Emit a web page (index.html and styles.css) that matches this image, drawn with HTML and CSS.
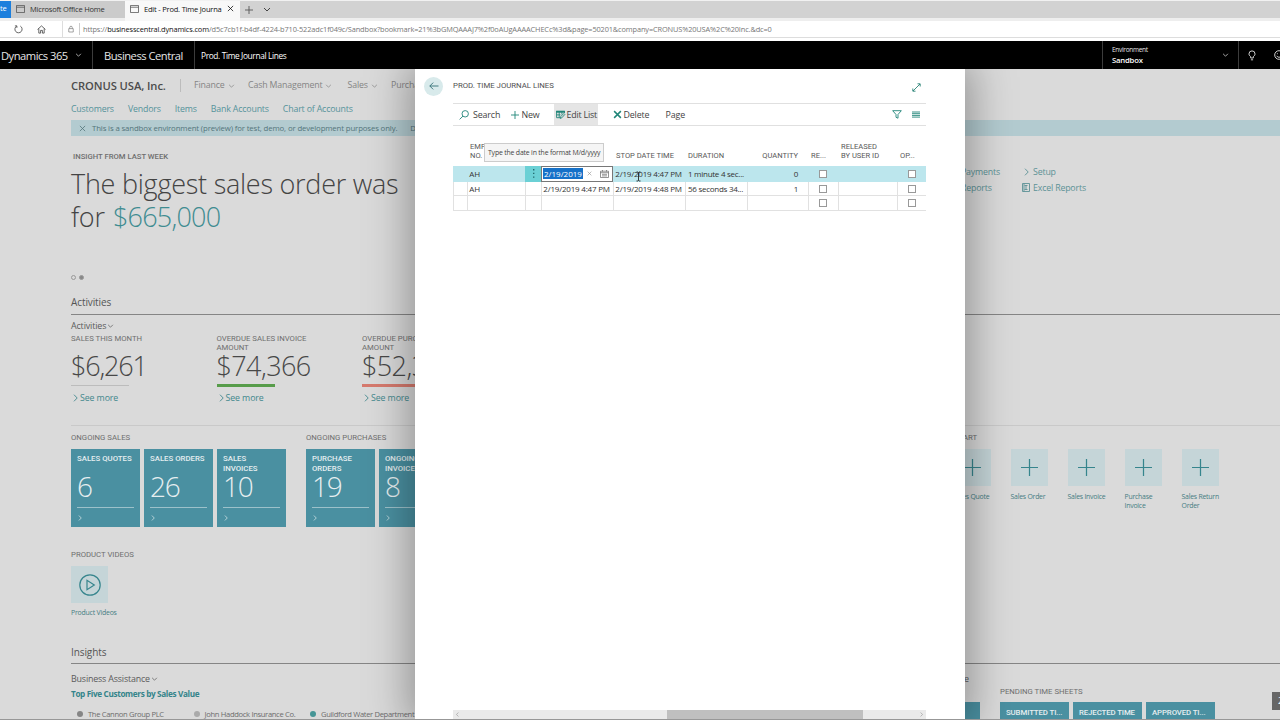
FILE: index.html
```html
<!DOCTYPE html>
<html lang="en">
<head>
<meta charset="utf-8">
<title>Edit - Prod. Time Journal Lines</title>
<link rel="stylesheet" href="styles.css">
</head>
<body>
<svg width="0" height="0" class="defs">
  <symbol id="chev" viewBox="0 0 8 5"><path d="M1 1l3 3 3-3"/></symbol>
  <symbol id="right" viewBox="0 0 5 8"><path d="M1 .7L4.2 4 1 7.3"/></symbol>
  <symbol id="cross" viewBox="0 0 8 8"><path d="M1 1l6 6M7 1L1 7"/></symbol>
  <symbol id="plus" viewBox="0 0 18 18"><path d="M9 0v18M0 9h18"/></symbol>
  <symbol id="win" viewBox="0 0 10 9"><path d="M.5 .5h9v8h-9zM.5 2.5h9"/></symbol>
</svg>

<header class="browser">
  <div class="tabs">
    <span class="tab-edge">te</span>
    <div class="tab"><svg class="i win"><use href="#win"/></svg><span>Microsoft Office Home</span></div>
    <div class="tab active"><svg class="i win"><use href="#win"/></svg><span class="tab-title">Edit - Prod. Time Journa</span><svg class="i x"><use href="#cross"/></svg></div>
    <svg class="i newtab"><use href="#plus"/></svg>
    <svg class="i more"><use href="#chev"/></svg>
  </div>
  <div class="address">
    <svg class="i reload" viewBox="0 0 10 10"><path d="M3 1.2A4 4 0 1 0 7 1.2M3.2 3.2V1H1"/></svg>
    <svg class="i home" viewBox="0 0 10 10"><path d="M.6 5L5 1l4.400 4M2 4v5h2V6h2v3h2V4"/></svg>
    <div class="url">
      <svg class="i lock" viewBox="0 0 8 10"><path d="M1 4.500h6v4.500H1zM2.300 4.500V3a1.700 1.700 0 0 1 3.400 0v1.500"/></svg>
      <span class="url-sep"></span>
      <span class="url-text">https://<b>businesscentral.dynamics.com</b>/d5c7cb1f-b4df-4224-b710-522adc1f049c/Sandbox?bookmark=21%3bGMQAAAJ7%2f0oAUgAAAACHECc%3d&amp;page=50201&amp;company=CRONUS%20USA%2C%20Inc.&amp;dc=0</span>
    </div>
  </div>
</header>

<div class="suite">
  <div class="suite-app"><span>Dynamics 365</span><svg class="i sm"><use href="#chev"/></svg></div>
  <div class="suite-product"><span>Business Central</span></div>
  <div class="suite-page"><span>Prod. Time Journal Lines</span></div>
  <div class="suite-env"><div><small>Environment</small><strong>Sandbox</strong></div><svg class="i sm"><use href="#chev"/></svg></div>
  <div class="suite-icons">
    <svg class="i bulb" viewBox="0 0 8 11"><path d="M2.700 8V6.600C1.500 5.800 1 5 1 3.900a3 3 0 0 1 6 0c0 1.100-.5 1.900-1.700 2.700V8zM2.900 9.800h2.200"/></svg>
    <svg class="i smile" viewBox="0 0 10 10"><circle cx="5" cy="5" r="4.300"/><path d="M2.700 5.800c1 2 3.600 2 4.600 0M3.400 3.300v.9M6.600 3.300v.9"/></svg>
  </div>
</div>

<main class="home-page">
  <nav class="menu">
    <span class="company">CRONUS USA, Inc.</span><span class="menu-sep"></span>
    <span class="m1">Finance<svg class="i sm"><use href="#chev"/></svg></span>
    <span class="m2">Cash Management<svg class="i sm"><use href="#chev"/></svg></span>
    <span class="m3">Sales<svg class="i sm"><use href="#chev"/></svg></span>
    <span class="m4">Purchasing</span>
  </nav>
  <nav class="submenu"><span>Customers</span><span>Vendors</span><span>Items</span><span>Bank Accounts</span><span>Chart of Accounts</span></nav>
  <div class="banner"><svg class="i bx"><use href="#cross"/></svg><span>This is a sandbox environment (preview) for test, demo, or development purposes only.</span><span class="dont">Don't show again</span></div>

  <section class="split hero">
    <div>
      <div class="cap insight">INSIGHT FROM LAST WEEK</div>
      <h1>The biggest sales order was<br>for <em>$665,000</em></h1>
      <div class="dots"><i></i><i class="on"></i></div>
    </div>
    <div class="actions">
      <div class="acol pay"><span>Payments</span><span>Reports</span></div>
      <div class="acol"><span><svg class="i ar"><use href="#right"/></svg>Setup</span><span><svg class="i xl" viewBox="0 0 8 9"><path d="M.5 .5h7v8h-7zM2.500 2.500h3M2.500 6.500h3M4 2.500v4M2 .5v8"/></svg>Excel Reports</span></div>
    </div>
  </section>

  <h2>Activities</h2>
  <h3>Activities<svg class="i h3c"><use href="#chev"/></svg></h3>
  <div class="kpis">
    <div class="kpi"><div class="cap">SALES THIS MONTH</div><div class="num tight">$6,261</div><div class="bar none"></div><a><svg class="i ar"><use href="#right"/></svg>See more</a></div>
    <div class="kpi"><div class="cap">OVERDUE SALES INVOICE AMOUNT</div><div class="num">$74,366</div><div class="bar good"></div><a><svg class="i ar"><use href="#right"/></svg>See more</a></div>
    <div class="kpi"><div class="cap">OVERDUE PURCH. INVOICE AMOUNT</div><div class="num">$52,373</div><div class="bar bad"></div><a><svg class="i ar"><use href="#right"/></svg>See more</a></div>
  </div>

  <section class="split cues">
    <div class="groups">
      <div class="group">
        <div class="cap">ONGOING SALES</div>
        <div class="tiles">
          <div class="tile"><b>SALES QUOTES</b><span>6</span><hr><svg class="i ar"><use href="#right"/></svg></div>
          <div class="tile"><b>SALES ORDERS</b><span>26</span><hr><svg class="i ar"><use href="#right"/></svg></div>
          <div class="tile"><b>SALES INVOICES</b><span>10</span><hr><svg class="i ar"><use href="#right"/></svg></div>
        </div>
      </div>
      <div class="group">
        <div class="cap">ONGOING PURCHASES</div>
        <div class="tiles">
          <div class="tile"><b>PURCHASE ORDERS</b><span>19</span><hr><svg class="i ar"><use href="#right"/></svg></div>
          <div class="tile"><b>ONGOING INVOICES</b><span>8</span><hr><svg class="i ar"><use href="#right"/></svg></div>
        </div>
      </div>
    </div>
    <div class="start">
      <div class="cap">START</div>
      <div class="starts">
        <div class="act"><i><svg class="i pl"><use href="#plus"/></svg></i><span>Sales Quote</span></div>
        <div class="act"><i><svg class="i pl"><use href="#plus"/></svg></i><span>Sales Order</span></div>
        <div class="act"><i><svg class="i pl"><use href="#plus"/></svg></i><span>Sales Invoice</span></div>
        <div class="act"><i><svg class="i pl"><use href="#plus"/></svg></i><span>Purchase<br>Invoice</span></div>
        <div class="act"><i><svg class="i pl"><use href="#plus"/></svg></i><span>Sales Return<br>Order</span></div>
      </div>
    </div>
  </section>

  <div class="videos">
    <div class="cap">PRODUCT VIDEOS</div>
    <div class="act"><i><svg class="i play" viewBox="0 0 22 22"><circle cx="11" cy="11" r="10.200"/><path d="M8 6.300v9.400l7.300-4.700z"/></svg></i><span>Product Videos</span></div>
  </div>

  <h2 class="insights-title">Insights</h2>
  <section class="split">
    <div class="assist">
      <h3>Business Assistance<svg class="i h3c"><use href="#chev"/></svg></h3>
      <h4>Top Five Customers by Sales Value</h4>
      <div class="legend"><span><i class="c1"></i>The Cannon Group PLC</span><span><i class="c2"></i>John Haddock Insurance Co.</span><span><i class="c3"></i>Guildford Water Department</span></div>
    </div>
    <div class="sheets">
      <div class="tail">e</div>
      <div class="sheet-row">
        <div class="tile lone"></div>
        <div>
          <div class="cap">PENDING TIME SHEETS</div>
          <div class="tiles"><div class="tile"><b>SUBMITTED TI...</b></div><div class="tile"><b>REJECTED TIME</b></div><div class="tile"><b>APPROVED TI...</b></div></div>
        </div>
      </div>
    </div>
  </section>
  <div class="counter">2</div>
</main>

<section class="panel">
  <div class="panel-head">
    <span class="back"><svg class="i" viewBox="0 0 10 8"><path d="M9.500 4H.8M4.200 .6L.8 4l3.400 3.400"/></svg></span>
    <span class="title">PROD. TIME JOURNAL LINES</span>
    <svg class="i expand" viewBox="0 0 9 9"><path d="M1 8l7-7M5.500 .8h2.700v2.700M.8 5.500v2.700h2.700"/></svg>
  </div>
  <div class="toolbar">
    <span class="search"><svg class="i" viewBox="0 0 10 10"><circle cx="6.200" cy="3.800" r="3.200"/><path d="M4 6.100L.6 9.400"/></svg>Search</span>
    <span class="new"><svg class="i"><use href="#plus"/></svg>New</span>
    <span class="edit"><svg class="i" viewBox="0 0 9 9"><path class="solid" d="M.2 .7h8.600v2H.2z"/><path d="M.6 1v6.700h3.400M.5 4.900h4M3.200 1v6.700M5.900 1v3.500M8.500 1v2"/><path d="M4.300 8.500l.5-2L7.800 3.500l1 1-3 3.300z"/></svg>Edit List</span>
    <span class="del"><svg class="i"><use href="#cross"/></svg>Delete</span>
    <span class="page">Page</span>
    <svg class="i filter" viewBox="0 0 10 9"><path d="M.7 .7h8.600L6 4.500v3.700L4 7.300V4.500z"/></svg>
    <svg class="i list" viewBox="0 0 8 7"><path d="M0 1h8M0 2.700h8M0 4.400h8M0 6.100h8"/></svg>
  </div>
  <div class="grid">
    <div class="row head">
      <span></span><span>EMP<br>NO.</span><span></span><span></span><span>STOP DATE TIME</span><span>DURATION</span><span class="r">QUANTITY</span><span>RE...</span><span>RELEASED<br>BY USER ID</span><span>OP...</span>
    </div>
    <div class="row sel">
      <span></span><span>AH</span><span class="dotsv"><svg viewBox="0 0 2 9"><path d="M0 0h1.400v1.400H0zM0 3.700h1.400v1.400H0zM0 7.400h1.400v1.400H0z"/></svg></span>
      <span class="field"><mark>2/19/2019 </mark><svg class="i fx"><use href="#cross"/></svg><svg class="i cal" viewBox="0 0 9 8"><path d="M.5 1.200h8v6.300h-8zM.5 2.700h8M2.500 0v1.500M6.500 0v1.500M2 4.300h5M2 5.900h5"/></svg></span>
      <span>2/19/2019 4:47 PM</span><span class="dur">1 minute 4 sec...</span><span class="r">0</span><span><i class="cb"></i></span><span></span><span><i class="cb"></i></span>
    </div>
    <div class="row">
      <span></span><span>AH</span><span></span><span>2/19/2019 4:47 PM</span><span>2/19/2019 4:48 PM</span><span class="dur">56 seconds 34...</span><span class="r">1</span><span><i class="cb"></i></span><span></span><span><i class="cb"></i></span>
    </div>
    <div class="row">
      <span></span><span></span><span></span><span></span><span></span><span></span><span></span><span><i class="cb"></i></span><span></span><span><i class="cb"></i></span>
    </div>
  </div>
  <div class="tip">Type the date in the format M/d/yyyy</div>
  <svg class="i caret" viewBox="0 0 5 10"><path d="M.5 .5h1.500L2.500 1 3 .5h1.500M2.500 1v8M.5 9.500h1.500l.5-.5.5.5h1.500"/></svg>
  <div class="scroll"><svg class="i ar back-ar"><use href="#right"/></svg><div class="thumb"></div><svg class="i ar"><use href="#right"/></svg></div>
</section>
<div class="bottom-edge"></div>
</body>
</html>
```
FILE: styles.css
```css
* { box-sizing: border-box; }
body { margin: 0; width: 1280px; height: 720px; overflow: hidden; position: relative; background: #dadada; font-family: "Open Sans", "Noto Sans", sans-serif; font-size: 9px; color: #5b5b5b; white-space: nowrap; }
.defs { position: absolute; }
.i { fill: none; stroke: currentColor; stroke-width: .9; display: block; flex: none; overflow: visible; }
h1, h2, h3, h4 { margin: 0; font-weight: 400; }
i { font-style: normal; }
.sm { width: 7px; height: 4px; }
.ar { width: 5px; height: 8px; }

.browser { height: 41px; background: #fff; position: relative; z-index: 3; border-top: 1px solid #f1f1f1; }
.tabs { height: 17px; background: #d2d2d2; display: flex; align-items: center; font-size: 7.500px; letter-spacing: -.2px; line-height: 14px; color: #333; }
.tab-edge { width: 11px; height: 17px; line-height: 15px; background: #1c7fdd; color: #fff; }
.tab { width: 114px; height: 17px; display: flex; align-items: center; padding: 0 0 2px 5px; gap: 5px; background: #cbcbcb; }
.tab.active { width: 115px; height: 20px; align-self: flex-start; background: #f8f8f8; color: #111; padding-bottom: 5px; position: relative; }
.win { width: 9px; height: 8px; color: #555; }
.tab-title { width: 78px; letter-spacing: -.2px; }
.x { width: 7px; height: 7px; }
.newtab { width: 8px; height: 8px; margin-left: 5px; stroke-width: 2; color: #555; }
.more { width: 8px; height: 5px; margin-left: 10px; }
.address { height: 20px; border-top: 3px solid #eee; border-bottom: 1px solid #ddd; display: flex; align-items: center; color: #444; }
.reload { width: 9px; height: 9px; margin-left: 14px; }
.home { width: 9px; height: 9px; margin-left: 14px; }
.url { display: flex; align-items: center; border-left: 1px solid #ddd; height: 16px; margin-left: 16px; }
.lock { width: 6px; height: 8px; margin-left: 5px; color: #777; }
.url-sep { width: 1px; height: 12px; background: #ccc; margin: 0 3px 0 5px; }
.url-text { font-size: 7.400px; letter-spacing: -.13px; color: #777; }
.url-text b { font-weight: 400; color: #111; }

.suite { height: 28px; background: #000; color: #e6e6e6; display: flex; position: relative; z-index: 3; overflow: hidden; }
.suite > div { display: flex; align-items: center; height: 28px; border-right: 1px solid #3c3c3c; flex: none; }
.suite-app { width: 93px; padding-left: 1px; gap: 7px; font-size: 11.200px; letter-spacing: -.5px; }
.suite-product { width: 102px; padding-left: 11px; font-size: 11.200px; letter-spacing: -.5px; }
.suite-page { width: 908px; padding-left: 6px; font-size: 8.300px; letter-spacing: -.35px; color: #fff; }
.suite-env { width: 136px; padding: 0 9px; justify-content: space-between; line-height: 10px; }
.suite-env small, .suite-env strong { display: block; font-weight: 400; font-size: 6.500px; letter-spacing: -.3px; }
.suite-env strong { font-size: 7.700px; font-weight: 600; letter-spacing: -.2px; color: #fff; }
.suite .suite-icons { border: 0; padding-left: 9px; gap: 18px; }
.bulb { width: 8px; height: 11px; }
.smile { width: 10px; height: 10px; }

main { padding-left: 71px; position: relative; height: 651px; overflow: hidden; }
.menu { margin-top: 7px; height: 20px; display: flex; align-items: center; font-size: 8.800px; letter-spacing: -.15px; color: #858585; line-height: 19px; padding-bottom: 1px; }
.menu span { display: flex; align-items: center; gap: 3px; }
.menu .company { width: 109px; font-size: 11.200px; font-weight: 600; letter-spacing: -.08px; color: #4c4c4c; }
.menu .menu-sep { width: 1px; height: 13px; background: #bcbcbc; }
.m1 { margin-left: 13px; width: 54px; }
.m2 { width: 99.500px; }
.m3 { width: 43.500px; }
.submenu { height: 20px; margin: 3px 0 1px; display: flex; gap: 14px; align-items: center; font-size: 8.800px; letter-spacing: -.17px; color: #55939a; }
.banner { height: 16px; background: #b3cbd0; display: flex; align-items: center; font-size: 7.800px; letter-spacing: -.135px; color: #54757b; }
.bx { width: 7px; height: 7px; margin: 0 6px 0 8px; }
.dont { margin-left: 13px; }
.split { display: grid; grid-template-columns: 889px 1fr; }
.cap { font-family: Roboto, sans-serif; font-size: 7.750px; line-height: 9px; color: #6e6e6e; }
.hero { height: 156px; }
.insight { padding: 16px 0 0 2px; font-weight: 500; font-size: 7.700px; }
h1 { margin-top: 6px; font-size: 27px; line-height: 33px; font-weight: 300; letter-spacing: -.25px; color: #444; }
h1 em { font-style: normal; margin-left: 1.500px; letter-spacing: -.8px; color: #3f8c91; }
.dots { display: flex; gap: 3px; margin-top: 42px; }
.dots i { width: 5px; height: 5px; border-radius: 50%; border: 1px solid #999; }
.dots .on { background: #888; }
.actions { display: flex; padding-top: 27.500px; color: #5c9296; font-size: 8.800px; letter-spacing: -.17px; line-height: 16px; }
.acol { display: grid; align-content: start; }
.acol span { display: flex; align-items: center; height: 16px; gap: 4px; }
.pay { width: 62px; }
.pay span { padding-left: 1px; }
.acol .ar { margin: 0 0 0 2px; }
.xl { width: 8px; height: 9px; margin-right: -1px; }
h2 { height: 23px; line-height: 20px; border-bottom: 1px solid #858585; font-size: 10px; letter-spacing: -.1px; color: #555; }
.insights-title { line-height: 22px; }
h3 { height: 19px; line-height: 21px; padding-top: 2px; display: flex; align-items: center; gap: 1px; font-size: 8.900px; letter-spacing: -.13px; }
.h3c { width: 7px; height: 4px; }
.kpis { display: flex; height: 92px; border-bottom: 1px solid #c9c9c9; }
.kpi { width: 145.500px; }
.kpi .cap { height: 18px; white-space: normal; width: 100px; }
.num { font-size: 27px; line-height: 28px; height: 32px; font-weight: 300; letter-spacing: -.6px; color: #484848; }
.tight { letter-spacing: -1.200px; }
.bar { width: 58px; height: 3px; margin-bottom: 5px; }
.none { border-top: 1px solid #bcbcbc; margin-top: 1px; margin-bottom: 4px; }
.good { background: #579c4a; }
.bad { background: #d67a6e; }
.kpi a { display: flex; align-items: center; gap: 2px; padding-left: 2px; height: 12px; font-size: 8.800px; letter-spacing: -.1px; color: #42888d; }
.cues { height: 124px; padding-top: 7px; }
.groups { display: flex; gap: 20px; }
.tiles { display: flex; gap: 4px; margin-top: 7px; }
.tile { width: 69px; height: 78px; background: #4a90a1; color: #e6eef0; padding: 5px 6px 0; flex: none; }
.tile b { display: block; font-family: Roboto, sans-serif; font-size: 7.800px; font-weight: 500; line-height: 10px; height: 19px; white-space: normal; }
.tile span { display: block; font-size: 28px; line-height: 27px; height: 34px; font-weight: 300; letter-spacing: -1.200px; }
.tile hr { margin: 0 0 7px; border: 0; height: 1px; background: #9cc1ca; }
.tile .ar { width: 4px; height: 6px; margin-left: 1px; }
.start .cap { margin-left: -6px; }
.starts { display: flex; gap: 20px; margin: 7px 0 0 -6.500px; }
.act { width: 37px; }
.act > i { display: grid; place-items: center; width: 37px; height: 37px; background: #c5d5d8; color: #36858d; }
.act span { display: block; margin-top: 6px; font-size: 6.900px; line-height: 9px; letter-spacing: -.23px; color: #457d83; }
.pl { width: 17px; height: 17px; stroke-width: 1.300; }
.play { width: 22px; height: 22px; stroke-width: 1.200; }
.videos { height: 91px; }
.videos .act { margin-top: 7px; }
.videos .act span { margin-top: 5px; letter-spacing: -.2px; }
.assist h3 { height: 23px; padding-top: 6px; letter-spacing: -.17px; }
h4 { font-size: 8.200px; font-weight: 700; letter-spacing: -.35px; line-height: 14px; color: #34848a; }
.legend { display: flex; padding-left: 6px; margin-top: 7px; font-size: 7.600px; letter-spacing: -.33px; line-height: 12px; color: #6c6c6c; }
.legend span { display: flex; align-items: center; gap: 5px; width: 116.500px; }
.legend i { width: 6px; height: 6px; border-radius: 50%; }
.c1 { background: #858585; } .c2 { background: #aaa; } .c3 { background: #459596; }
.tail { height: 23px; line-height: 30px; font-size: 9px; padding-left: 4px; }
.sheet-row { display: flex; gap: 20px; }
.sheet-row .lone { width: 20px; margin-top: 15px; }
.sheets .tiles { margin-top: 6px; }
.sheets .tile { padding-top: 6px; padding-right: 0; }
.sheets b { white-space: nowrap; letter-spacing: -.1px; }
.sheets .cap { height: 9px; }
.counter { position: absolute; left: 1272px; top: 623px; width: 8px; height: 18px; padding-left: 6px; line-height: 18px; background: #666; color: #fff; }

.panel { position: absolute; z-index: 2; left: 415px; top: 69px; width: 550px; height: 651px; background: #fff; box-shadow: 0 0 40px 6px rgba(0, 0, 0, .34); color: #444; }
.panel-head { height: 34px; display: flex; align-items: center; padding: 0 44px 0 9px; }
.back { width: 19px; height: 19px; border-radius: 50%; background: #d8eaeb; display: grid; place-items: center; color: #326f75; }
.back svg { width: 10px; height: 8px; }
.title { margin-left: 10px; font: 7.800px/10px Roboto, sans-serif; color: #505050; }
.expand { width: 9px; height: 9px; margin-left: auto; margin-top: 2px; color: #2b8577; }
.toolbar { margin: 0 39px 0 38px; height: 23px; border-top: 1px solid #e0e0e0; border-bottom: 1px solid #e0e0e0; display: flex; align-items: center; font-size: 8.900px; letter-spacing: -.15px; }
.toolbar span { display: flex; align-items: center; height: 21px; }
.toolbar svg { color: #1f8578; }
.search { width: 57.500px; padding-left: 6px; gap: 4px; } .search svg { width: 10px; height: 10px; }
.new { width: 43.500px; gap: 3px; } .new svg { width: 8px; height: 8px; stroke-width: 2; }
.edit { width: 44px; background: #e5e5e5; gap: 2px; padding-left: 1.500px; letter-spacing: -.22px; } .edit svg { width: 9px; height: 9px; }
.solid { fill: currentColor; stroke: none; }
.del { padding-left: 14.500px; width: 67.500px; gap: 2px; } .del svg { width: 9px; height: 9px; stroke-width: 1.300; }
.filter { width: 10px; height: 9px; margin-left: auto; }
.list { width: 8px; height: 7px; margin: 0 6px 0 10px; }
.grid { margin: 15px 39px 0 38px; font-size: 8px; letter-spacing: -.2px; color: #333; }
.row { display: grid; grid-template-columns: 14px 58px 16px 72px 72px 62px 61px 30px 59px 29px; height: 14.500px; border-bottom: 1px solid #e1e1e1; }
.row > span { border-left: 1px solid #e1e1e1; padding-left: 1.300px; line-height: 14px; overflow: hidden; }
.row > span.r { text-align: right; padding-right: 10px; }
.row .dur { letter-spacing: -.27px; padding-left: 2px; }
.head { height: 25px; align-items: end; border: 0; font: 7.550px/9px Roboto, sans-serif; letter-spacing: 0; color: #585858; padding-bottom: 6px; }
.row.head > span { border: 0; line-height: 9px; padding-left: 3px; }
.sel { background: #bce6ed; height: 15.500px; border: 0; }
.sel > span { border-color: transparent; line-height: 15px; }
.sel .dotsv { background: #6bd0d5; display: grid; place-items: center; padding: 0; }
.dotsv svg { width: 2px; height: 9px; fill: #256b70; }
.row > .field { background: #fff; border: 1px solid #777; display: flex; align-items: center; padding-left: 1px; }
mark { background: #1671c8; color: #fff; line-height: 11px; width: 40px; padding-left: 1px; letter-spacing: 0; white-space: pre; overflow: hidden; }
.fx { width: 5px; height: 5px; margin-left: 4px; color: #888; }
.cal { width: 9px; height: 8px; margin-left: 8px; color: #666; stroke-width: .7; }
.cb { display: block; width: 8px; height: 8px; border: 1px solid #999; background: #fff; margin: 3px 0 0 9px; }
.row span:last-child .cb { margin-left: 8.500px; }
.sel .cb { margin-top: 4px; }
.tip { position: absolute; left: 69px; top: 74px; width: 120px; height: 19px; line-height: 17px; padding-left: 3px; background: #f5f5f5; border: 1px solid #ccc; font-size: 6.900px; letter-spacing: -.18px; }
.caret { position: absolute; left: 221px; top: 102px; width: 5px; height: 11px; color: #222; }
.scroll { position: absolute; left: 38px; right: 39px; bottom: 1px; height: 9px; background: #eaeaea; display: flex; align-items: center; justify-content: space-between; padding: 0 3px; color: #888; }
.scroll .ar { width: 3px; height: 5px; }
.back-ar { transform: scaleX(-1); }
.thumb { width: 196px; height: 9px; background: #bfbfbf; margin-left: 151px; }
.bottom-edge { position: absolute; z-index: 4; left: 0; right: 0; bottom: 0; height: 1px; background: #979797; }
```
